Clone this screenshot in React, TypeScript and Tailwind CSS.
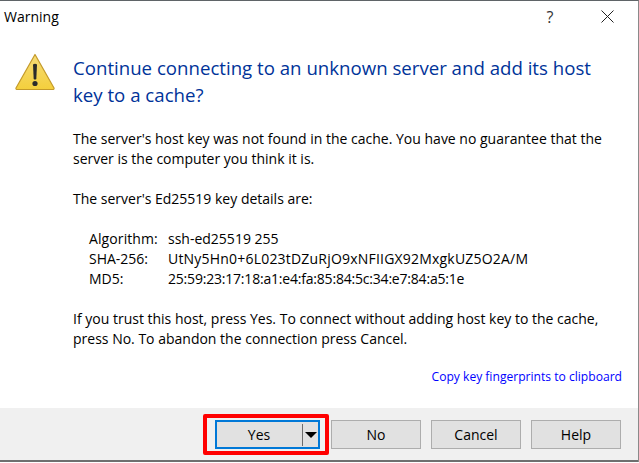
import React from 'react';

const font = { fontFamily: '"Open Sans", "Noto Sans", sans-serif' };

function WarningIcon() {
  return (
    <svg width="42" height="38" viewBox="0 0 42 38">
      <defs>
        <linearGradient id="warn" x1="0" y1="0" x2="0" y2="1">
          <stop offset="0" stopColor="#f6dc78" />
          <stop offset="1" stopColor="#f4cf3c" />
        </linearGradient>
      </defs>
      <path d="M21 1.5 L40 35 Q40.5 36.5 38.5 36.5 L3.5 36.5 Q1.5 36.5 2 35 Z" fill="url(#warn)" stroke="#c49a2a" strokeWidth="1.2" strokeLinejoin="round" />
      <path d="M19 11.5 Q21 10 23 11.5 L22.3 26 Q21 27 19.7 26 Z" fill="#2b2b2b" />
      <circle cx="21" cy="30.5" r="2.6" fill="#2b2b2b" />
    </svg>
  );
}

function Btn({ label }: { label: string }) {
  return (
    <button className="w-[90px] h-[29px] bg-[#e1e1e1] border border-[#adadad] text-[14px] text-black">
      {label}
    </button>
  );
}

export default function App() {
  return (
    <div className="w-[639px] h-[462px] bg-white overflow-hidden flex flex-col border-t border-[#5f6467] border-r border-r-[#8a8a8a]" style={font}>
      <div className="h-[31px] flex items-center shrink-0 pl-[4px] text-[14px] text-black">
        <span className="flex-1">Warning</span>
        <span className="w-[46px] text-[16px] text-[#333] text-center mr-[28px]">?</span>
        <svg width="13" height="13" viewBox="0 0 13 13" className="mr-[24px]">
          <path d="M0.5 0.5 L12.5 12.5 M12.5 0.5 L0.5 12.5" stroke="#222" strokeWidth="1" fill="none" />
        </svg>
      </div>

      <div className="flex-1 flex pl-[14px] pr-[16px] min-h-0">
        <div className="w-[59px] shrink-0 pt-[21px]">
          <WarningIcon />
        </div>
        <div className="flex-1 flex flex-col">
          <h1 className="text-[18.65px] leading-[27px] text-[#003399] pt-[22px] font-normal">
            Continue connecting to an unknown server and add its host key to a cache?
          </h1>
          <div className="text-[14px] leading-[20px] text-black mt-[21px]">
            <p>The server's host key was not found in the cache. You have no guarantee that the server is the computer you think it is.</p>
            <p className="mt-[20px]">The server's Ed25519 key details are:</p>
            <div className="mt-[20px] pl-[16px] grid grid-cols-[79px_1fr]">
              <span className="tracking-[0.1px]">Algorithm:</span>
              <span>ssh-ed25519 255</span>
              <span>SHA-256:</span>
              <span className="tracking-[0.2px]">UtNy5Hn0+6L023tDZuRjO9xNFIIGX92MxgkUZ5O2A/M</span>
              <span>MD5:</span>
              <span className="tracking-[-0.2px]">25:59:23:17:18:a1:e4:fa:85:84:5c:34:e7:84:a5:1e</span>
            </div>
            <p className="mt-[20px]">If you trust this host, press Yes. To connect without adding host key to the cache, press No. To abandon the connection press Cancel.</p>
          </div>
          <div className="mt-auto pb-[22px] text-right text-[12.1px] text-[#0000ff]">Copy key fingerprints to clipboard</div>
        </div>
      </div>

      <div className="h-[54px] shrink-0 bg-[#f0f0f0] border-b-2 border-[#6f6f6f] flex items-start justify-end gap-[10px] pr-[17px] pt-[12px]">
        <div className="relative mr-[1px]">
          <div className="w-[105px] h-[29px] bg-[#e1e1e1] border-2 border-[#0078d7] flex items-center text-[14px] text-black">
            <span className="flex-1 text-center pr-[1px]">Yes</span>
            <span className="w-px h-[22px] bg-[#6d6d6d]" />
            <span className="w-[15px] flex justify-center">
              <span className="w-0 h-0 border-x-[6px] border-x-transparent border-t-[6px] border-t-black" />
            </span>
          </div>
          <div className="absolute left-[-12px] right-[-9px] top-[-6px] bottom-[-6px] border-[4px] border-[#ff0000] rounded-[2px]" />
        </div>
        <Btn label="No" />
        <Btn label="Cancel" />
        <Btn label="Help" />
      </div>
    </div>
  );
}
